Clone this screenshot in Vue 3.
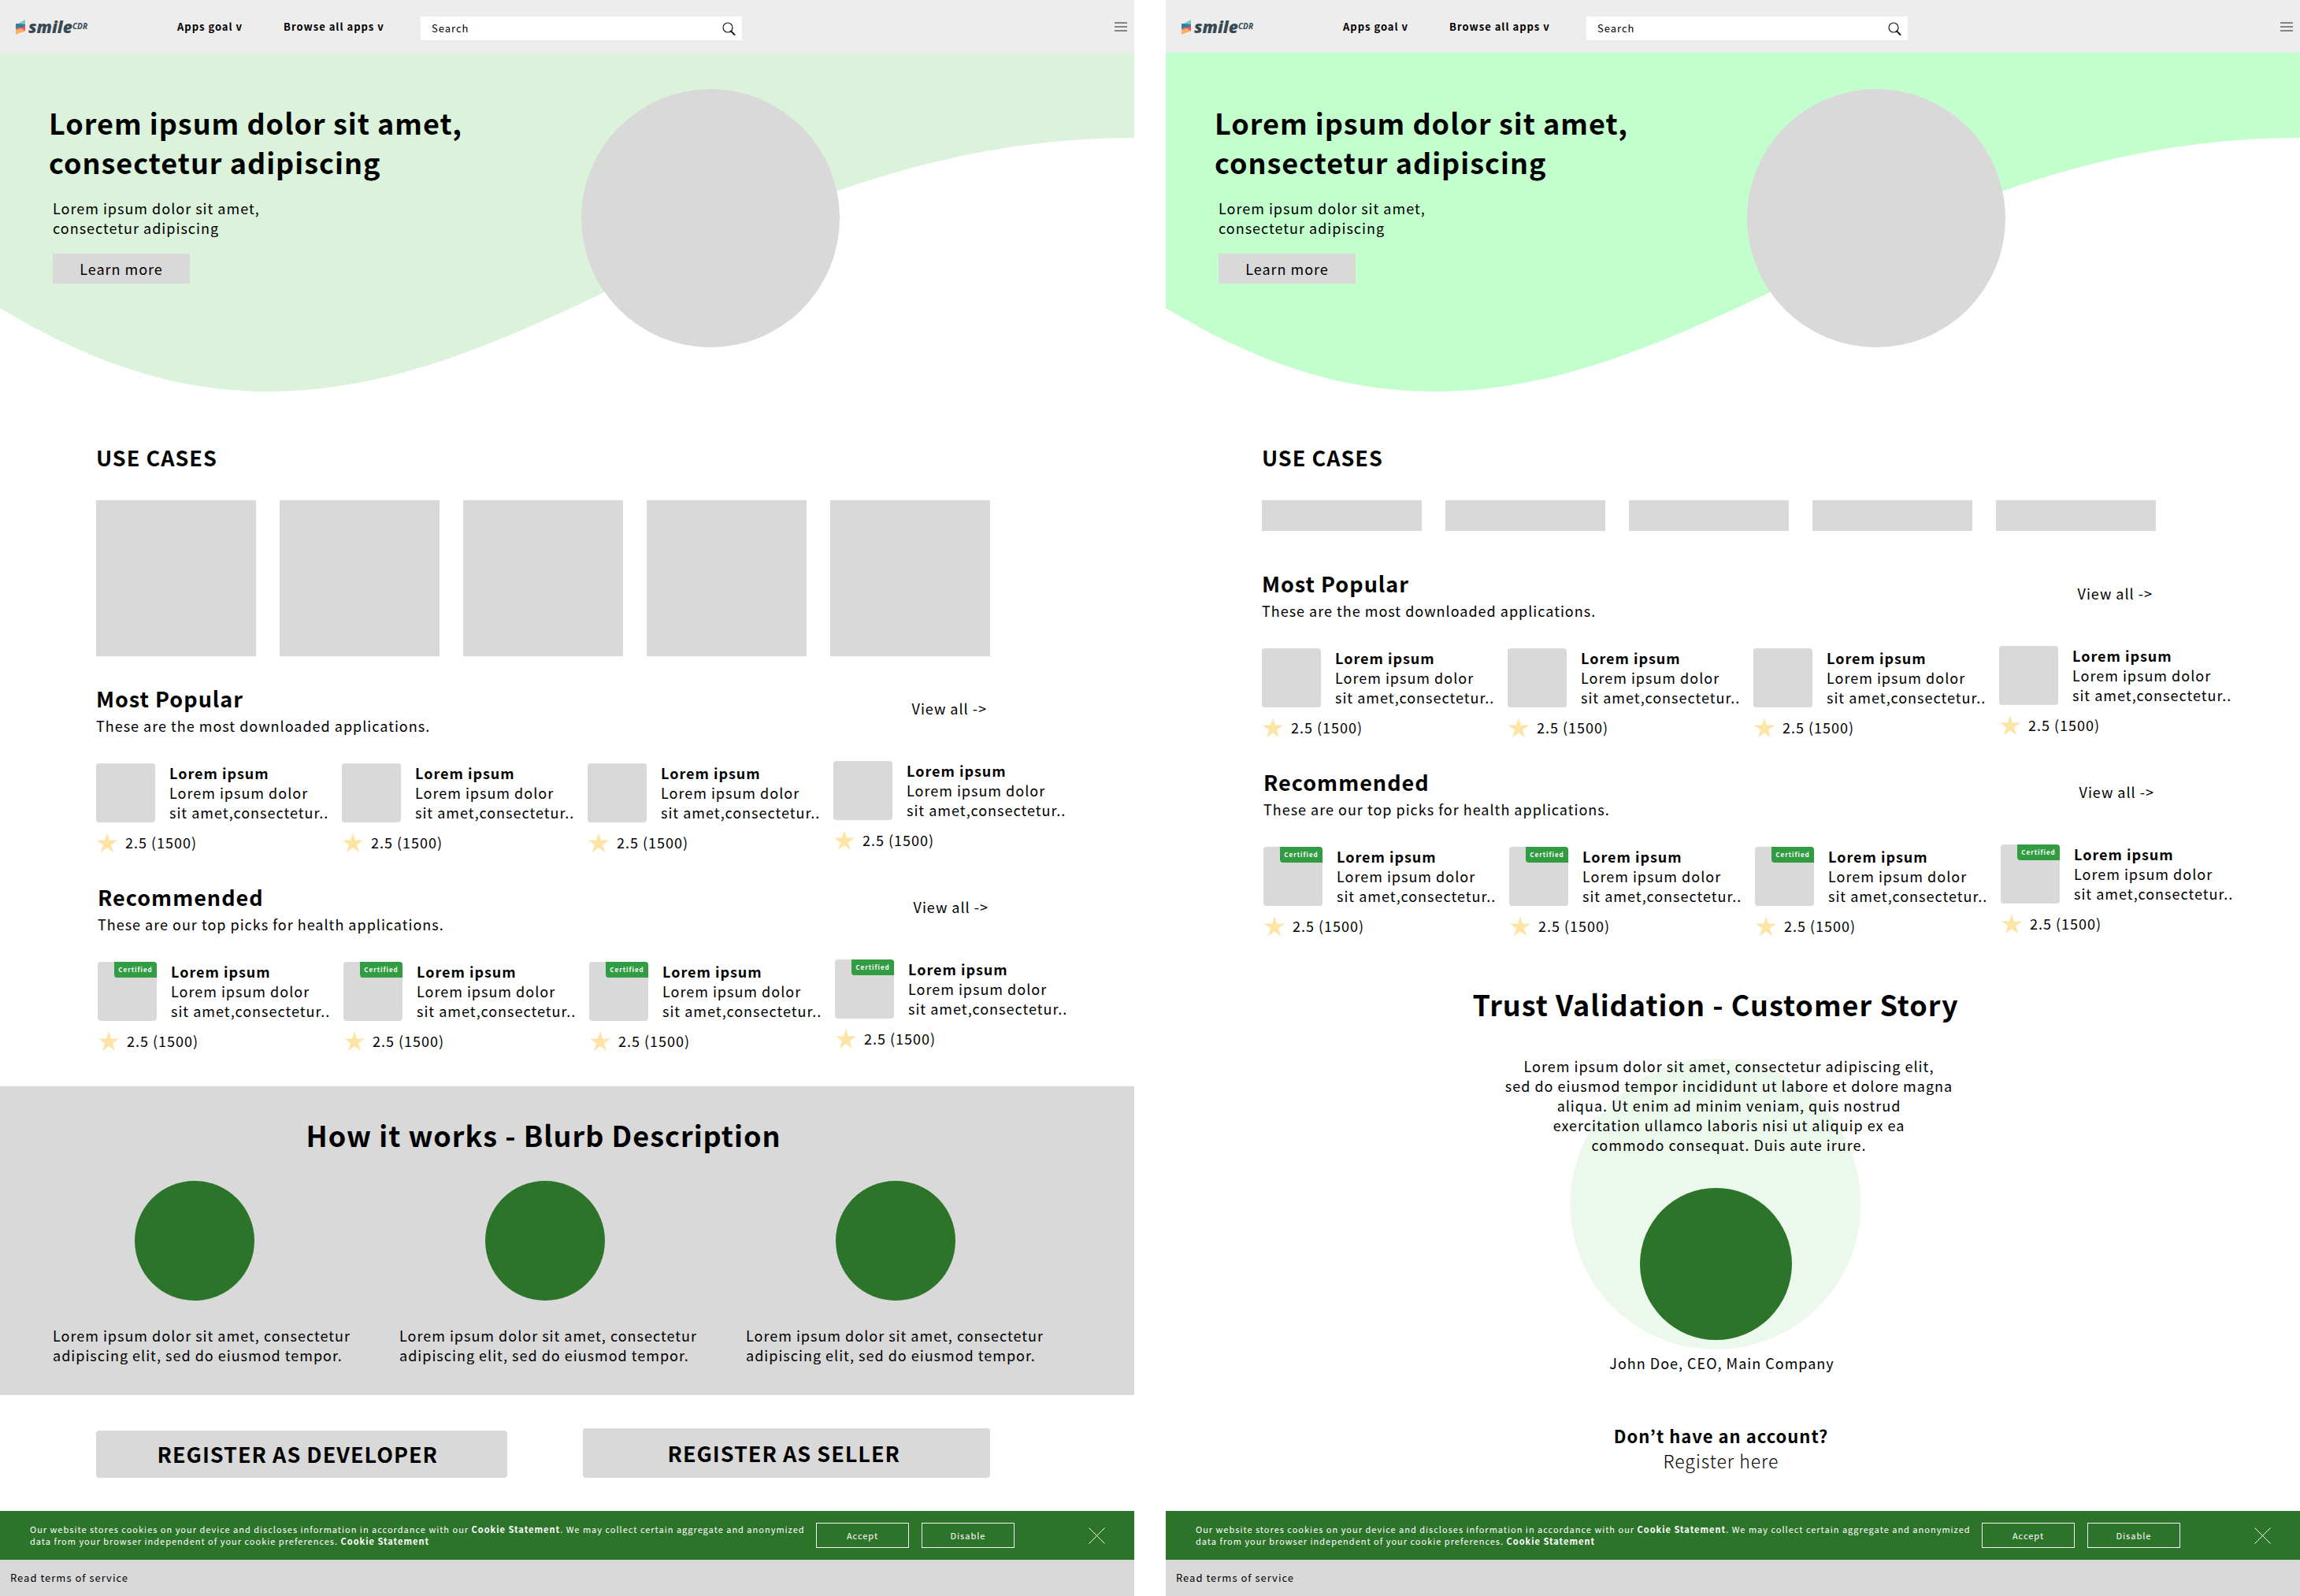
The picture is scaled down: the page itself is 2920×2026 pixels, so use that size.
<script setup>
const app = { name: 'Lorem ipsum', line1: 'Lorem ipsum dolor', line2: 'sit amet,consectetur..', rating: '2.5 (1500)' }
const apps = [1, 2, 3, 4].map((id) => ({ id, ...app }))

const groups = [
  { title: 'Most Popular', text: 'These are the most downloaded applications.', certified: false },
  { title: 'Recommended', text: 'These are our top picks for health applications.', certified: true },
]

const screens = [
  { id: 'classic', story: false },
  { id: 'compact', story: true },
]
</script>

<template>
  <div class="board">
    <div v-for="screen in screens" :key="screen.id" class="screen" :class="screen.id">
      <header class="top">
        <a href="#" class="logo" aria-label="Smile CDR">
          <svg width="100" height="32" viewBox="0 0 100 32">
            <polygon points="12,7 12,13 5,17 3,12" fill="#7cc6c0" />
            <polygon points="3,12 0,12 0,18 5,20 12,15 12,13" fill="#2f7f9f" />
            <polygon points="12,15 12,21 7,23 4,18" fill="#ee4b6b" />
            <polygon points="0,18 0,21 6,23 12,21 8,17" fill="#f2647a" />
            <polygon points="0,20 6,18 12,21 0,26" fill="#fbb05c" />
            <text x="16" y="24" class="word">smile</text>
            <text x="72" y="19" class="cdr">CDR</text>
          </svg>
        </a>
        <nav class="nav">
          <a href="#">Apps goal v</a>
          <a href="#">Browse all apps v</a>
        </nav>
        <form class="search" @submit.prevent>
          <input type="search" placeholder="Search" aria-label="Search" />
          <button type="submit" aria-label="Search">
            <svg width="17" height="17" viewBox="0 0 17 17" fill="none" stroke="#1d1d1d">
              <circle cx="7" cy="7" r="6" stroke-width="1.2" />
              <path d="M11 11.5 L15.5 16" stroke-width="2" stroke-linecap="round" />
            </svg>
          </button>
        </form>
        <button class="menu" aria-label="Menu"><i></i><i></i><i></i></button>
      </header>

      <section class="hero">
        <svg class="wave" viewBox="0 0 1440 430" preserveAspectRatio="none" aria-hidden="true">
          <path d="M0 0 H1440 V108 C960 108 690 430 342 430 C208 430 100 384 0 324 Z" />
        </svg>
        <div class="copy">
          <h1>Lorem ipsum dolor sit amet,<br />consectetur adipiscing</h1>
          <p>Lorem ipsum dolor sit amet,<br />consectetur adipiscing</p>
          <button>Learn more</button>
        </div>
        <div class="disc"></div>
      </section>

      <section class="cases">
        <h2>USE CASES</h2>
        <div class="case-row">
          <div v-for="n in 5" :key="n" class="case"></div>
        </div>
      </section>

      <section v-for="group in groups" :key="group.title" class="group" :class="{ picks: group.certified }">
        <div class="group-head">
          <div>
            <h2>{{ group.title }}</h2>
            <p>{{ group.text }}</p>
          </div>
          <a href="#">View all -&gt;</a>
        </div>
        <div class="apps">
          <article v-for="item in apps" :key="item.id" class="app">
            <div class="app-main">
              <div class="tile"><span v-if="group.certified" class="badge">Certified</span></div>
              <div>
                <h3>{{ item.name }}</h3>
                <p>{{ item.line1 }}<br />{{ item.line2 }}</p>
              </div>
            </div>
            <div class="rating">
              <svg width="26" height="25" viewBox="0 0 26 25" aria-hidden="true">
                <polygon points="13,0 16.1,9.4 26,9.5 18,15.4 21,25 13,19.2 5,25 8,15.4 0,9.5 9.9,9.4" fill="#ffe4a8" />
              </svg>
              <span>{{ item.rating }}</span>
            </div>
          </article>
        </div>
      </section>

      <template v-if="!screen.story">
        <section class="how">
          <h2>How it works - Blurb Description</h2>
          <div class="dots">
            <div v-for="n in 3" :key="n" class="dot"></div>
          </div>
          <div class="blurbs">
            <p v-for="n in 3" :key="n">Lorem ipsum dolor sit amet, consectetur<br />adipiscing elit, sed do eiusmod tempor.</p>
          </div>
        </section>
        <div class="join">
          <button class="dev">REGISTER AS DEVELOPER</button>
          <button class="seller">REGISTER AS SELLER</button>
        </div>
      </template>

      <template v-else>
        <section class="story">
          <h2>Trust Validation - Customer Story</h2>
          <div class="quote">
            <div class="halo"></div>
            <p>
              Lorem ipsum dolor sit amet, consectetur adipiscing elit,<br />
              sed do eiusmod tempor incididunt ut labore et dolore magna<br />
              aliqua. Ut enim ad minim veniam, quis nostrud<br />
              exercitation ullamco laboris nisi ut aliquip ex ea<br />
              commodo consequat. Duis aute irure.
            </p>
            <div class="portrait"></div>
          </div>
          <p class="person">John Doe, CEO, Main Company</p>
          <div class="signup">
            <strong>Don’t have an account?</strong>
            <a href="#">Register here</a>
          </div>
        </section>
      </template>

      <aside class="cookies">
        <p>
          Our website stores cookies on your device and discloses information in accordance with our
          <b>Cookie Statement</b>. We may collect certain aggregate and anonymized<br />
          data from your browser independent of your cookie preferences. <b>Cookie Statement</b>
        </p>
        <div class="choices">
          <button>Accept</button>
          <button>Disable</button>
        </div>
        <button class="close" aria-label="Close">
          <svg width="21" height="21" viewBox="0 0 21 21" stroke="#fff" stroke-width="1">
            <path d="M0.5 0.5 L20.5 20.5 M20.5 0.5 L0.5 20.5" />
          </svg>
        </button>
      </aside>
      <footer class="terms"><a href="#">Read terms of service</a></footer>
    </div>
  </div>
</template>

<style>
body {
  margin: 0;
  background: #fff;
}
</style>

<style scoped>
.board {
  display: flex;
  gap: 40px;
  min-height: 100vh;
  color: #000;
  font: 400 18px/25px "Noto Sans CJK JP", "Noto Sans", sans-serif;
  letter-spacing: 1px;
}
.screen {
  flex: 1 1 0;
  min-width: 0;
  display: flex;
  flex-direction: column;
  overflow: hidden;
}
h1, h2, h3, p {
  margin: 0;
}
a {
  color: inherit;
  text-decoration: none;
}
button, input {
  margin: 0;
  padding: 0;
  border: 0;
  border-radius: 0;
  background: none;
  color: inherit;
  font: inherit;
  letter-spacing: inherit;
}
svg {
  display: block;
  flex: none;
}
h1 {
  font-size: 36px;
  line-height: 50px;
}
h2 {
  font-size: 27px;
  line-height: 40px;
}
h3 {
  font-size: 18px;
  line-height: 25px;
}

/* Top bar */
.top {
  display: flex;
  align-items: center;
  height: 67px;
  padding: 0 9px 0 20px;
  background: #ededed;
  font-size: 13px;
  line-height: 20px;
}
.logo {
  width: 205px;
}
.logo svg {
  overflow: visible;
}
.word, .cdr {
  font-family: "Open Sans", sans-serif;
  font-style: italic;
  font-weight: 800;
  fill: #394a52;
  letter-spacing: normal;
}
.word {
  font-size: 21px;
}
.cdr {
  font-size: 10px;
  font-weight: 700;
}
.nav {
  display: flex;
  gap: 52px;
  width: 309px;
  font-weight: 600;
  white-space: nowrap;
}
.search {
  display: flex;
  align-items: center;
  width: 408px;
  height: 30px;
  margin-top: 5px;
  background: #fff;
}
.search input {
  flex: 1;
  min-width: 0;
  padding-left: 14px;
  outline: 0;
  appearance: none;
}
.search input::placeholder {
  color: #000;
  opacity: 1;
}
.search button {
  padding-right: 8px;
}
.menu {
  display: grid;
  gap: 3px;
  width: 16px;
  margin-left: auto;
}
.menu i {
  height: 2px;
  background: #858585;
}

/* Hero */
.hero {
  position: relative;
  display: flex;
  height: 430px;
  padding-left: 62px;
}
.wave {
  position: absolute;
  inset: 0;
  width: 100%;
  height: 100%;
  fill: #dbf2db;
}
.compact .wave {
  fill: #c3ffcc;
}
.copy {
  position: relative;
  width: 676px;
  padding-top: 63px;
}
.copy p {
  margin: 22px 0 20px 5px;
}
.copy button {
  width: 174px;
  height: 38px;
  margin-left: 5px;
  background: #d9d9d9;
}
.disc {
  position: relative;
  width: 328px;
  height: 328px;
  margin-top: 46px;
  border-radius: 50%;
  background: #d9d9d9;
}

/* Use cases */
.cases {
  padding: 64px 183px 0 122px;
}
.case-row {
  display: flex;
  gap: 30px;
  margin-top: 34px;
}
.case {
  flex: 1;
  height: 198px;
  background: #d9d9d9;
}
.compact .case {
  height: 39px;
}

/* App groups */
.group {
  padding: 34px 183px 0 122px;
}
.compact .group {
  padding-top: 47px;
}
.group.picks {
  padding: 37px 181px 0 124px;
}
.group-head {
  display: flex;
  justify-content: space-between;
}
.group-head p {
  margin-top: 2px;
}
.group-head a {
  margin: 20px 4px 0 0;
}
.apps {
  display: grid;
  grid-template-columns: repeat(4, 312px);
  margin-top: 35px;
}
.app:last-child {
  margin-top: -3px;
}
.app-main {
  display: flex;
  gap: 18px;
  white-space: nowrap;
}
.tile {
  position: relative;
  flex: none;
  width: 75px;
  height: 75px;
  border-radius: 4px;
  background: #d9d9d9;
}
.badge {
  position: absolute;
  top: 0;
  right: 0;
  width: 54px;
  border-radius: 0 4px 0 4px;
  background: #319c42;
  color: #fff;
  font-size: 8px;
  font-weight: 700;
  line-height: 20px;
  text-align: center;
}
.rating {
  display: flex;
  align-items: center;
  gap: 10px;
  margin: 13px 0 0 1px;
}

/* How it works */
.how {
  height: 318px;
  margin-top: 45px;
  padding: 36px 0 38px;
  background: #d9d9d9;
}
.how h2, .story h2 {
  font-size: 36px;
  line-height: 50px;
  text-align: center;
}
.how h2 {
  padding-right: 60px;
}
.dots {
  display: flex;
  justify-content: space-between;
  padding: 34px 227px 0 171px;
}
.dot {
  width: 152px;
  height: 152px;
  border-radius: 50%;
  background: #2d742b;
}
.blurbs {
  display: grid;
  grid-template-columns: repeat(3, 440px);
  padding: 32px 0 0 67px;
  white-space: nowrap;
}

/* Registration buttons */
.join {
  display: flex;
  align-items: flex-end;
  gap: 96px;
  padding: 42px 183px 42px 122px;
}
.join button {
  flex: 1;
  height: 60px;
  padding-right: 10px;
  border-radius: 4px;
  background: #d9d9d9;
  font-size: 27px;
  font-weight: 700;
  line-height: 40px;
}
.join .seller {
  height: 63px;
  padding-right: 6px;
}

/* Customer story */
.story {
  padding: 61px 44px 48px 0;
  text-align: center;
}
.quote {
  position: relative;
  padding-top: 42px;
}
.quote p {
  position: relative;
  padding-left: 34px;
}
.halo {
  position: absolute;
  top: 45px;
  left: 50%;
  width: 369px;
  height: 369px;
  border-radius: 50%;
  background: #ecf8ec;
  transform: translateX(-50%);
}
.portrait {
  position: relative;
  width: 193px;
  height: 193px;
  margin: 42px auto 0;
  border-radius: 50%;
  background: #2d742b;
}
.person {
  padding: 17px 0 0 16px;
}
.signup {
  display: grid;
  margin-top: 63px;
  padding-left: 14px;
  font-size: 22px;
  line-height: 32px;
}
.signup a {
  font-size: 23px;
  font-weight: 300;
}

/* Cookie bar and footer */
.cookies {
  display: flex;
  align-items: center;
  height: 62px;
  margin-top: auto;
  padding-left: 38px;
  background: #2d742b;
  color: #fff;
  font-size: 11px;
  line-height: 15px;
}
.cookies p {
  width: 998px;
  white-space: nowrap;
}
.choices {
  display: flex;
  gap: 16px;
}
.choices button {
  width: 118px;
  height: 32px;
  border: 1px solid #fff;
}
.close {
  margin-left: 94px;
}
.terms {
  display: flex;
  align-items: center;
  height: 46px;
  padding-left: 13px;
  background: #d9d9d9;
  font-size: 13px;
  line-height: 20px;
}
</style>
